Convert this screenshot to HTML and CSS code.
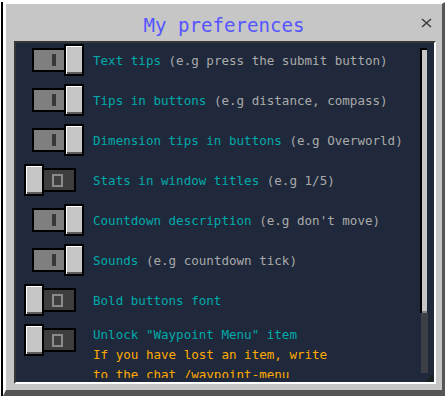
FILE: index.html
```html
<!DOCTYPE html>
<html lang="en">
  <head>
    <meta charset="UTF-8" />
    <meta name="viewport" content="width=device-width, initial-scale=1.0" />
    <title>My preferences</title>
    <link rel="stylesheet" href="styles.css">
  </head>
  <body>
    <div class="window">
      <div class="frame">
        <div class="header">
          <span></span>
          <h1 class="title">My preferences</h1>
          <button class="close" title="Close">
            <svg width="11" height="10" viewBox="0 0 11 10">
              <path d="M1 1 L10 9 M10 1 L1 9" stroke="#3f3f3f" stroke-width="1.6" fill="none" />
            </svg>
          </button>
        </div>

        <div class="panel">
          <ul class="options">
            <li class="option">
              <div class="toggle on"><span class="track"><span class="mark"></span></span><span class="knob"></span></div>
              <div class="label"><span class="name">Text tips</span> <span class="hint">(e.g press the submit button)</span></div>
            </li>
            <li class="option">
              <div class="toggle on"><span class="track"><span class="mark"></span></span><span class="knob"></span></div>
              <div class="label"><span class="name">Tips in buttons</span> <span class="hint">(e.g distance, compass)</span></div>
            </li>
            <li class="option">
              <div class="toggle on"><span class="track"><span class="mark"></span></span><span class="knob"></span></div>
              <div class="label"><span class="name">Dimension tips in buttons</span> <span class="hint">(e.g Overworld)</span></div>
            </li>
            <li class="option">
              <div class="toggle off"><span class="knob"></span><span class="track"><span class="ring"></span></span></div>
              <div class="label"><span class="name">Stats in window titles</span> <span class="hint">(e.g 1/5)</span></div>
            </li>
            <li class="option">
              <div class="toggle on"><span class="track"><span class="mark"></span></span><span class="knob"></span></div>
              <div class="label"><span class="name">Countdown description</span> <span class="hint">(e.g don't move)</span></div>
            </li>
            <li class="option">
              <div class="toggle on"><span class="track"><span class="mark"></span></span><span class="knob"></span></div>
              <div class="label"><span class="name">Sounds</span> <span class="hint">(e.g countdown tick)</span></div>
            </li>
            <li class="option">
              <div class="toggle off"><span class="knob"></span><span class="track"><span class="ring"></span></span></div>
              <div class="label"><span class="name">Bold buttons font</span></div>
            </li>
            <li class="option multi">
              <div class="toggle off"><span class="knob"></span><span class="track"><span class="ring"></span></span></div>
              <div class="label">
                <span class="name">Unlock "Waypoint Menu" item</span>
                <div class="warning">If you have lost an item, write<br />to the chat /waypoint-menu</div>
              </div>
            </li>
          </ul>

          <div class="scrollbar">
            <div class="thumb"></div>
            <div class="rail"></div>
          </div>
          <span class="grip"></span>
        </div>
      </div>
    </div>
  </body>
</html>
```

FILE: styles.css
```css
body {
  margin: 0;
  width: 447px;
  height: 396px;
  overflow: hidden;
  background: #fff;
  font-family: 'DejaVu Sans Mono', 'Liberation Mono', monospace;
}

.window {
  margin: 2px 0 0 1px;
  width: 444px;
  border-left: 2px solid #000;
  box-sizing: border-box;
}

.frame {
  height: 394px;
  box-sizing: border-box;
  display: flex;
  flex-direction: column;
  background: #c6c6c6;
  border-top: 2px solid #fff;
  border-left: 3px solid #fff;
  border-right: 3px solid #555;
  border-bottom: 6px solid #555;
}

/* Заголовок */
.header {
  height: 37px;
  display: grid;
  grid-template-columns: 1fr auto 1fr;
  align-items: center;
}

.title {
  margin: 0;
  padding-top: 6px;
  line-height: 31px;
  font-size: 19.1px;
  font-weight: normal;
  color: #5555ff;
}

.close {
  justify-self: end;
  margin-right: 10px;
  padding: 0;
  border: none;
  background: none;
  width: 11px;
  height: 10px;
  display: flex;
}

/* Список настроек */
.panel {
  flex: 1;
  min-height: 0;
  margin: 0 6px 6px 8px;
  display: flex;
  position: relative;
  overflow: hidden;
  background: #20293b;
  border-top: 2px solid #373737;
  border-left: 2px solid #373737;
  border-right: 2px solid #fff;
  border-bottom: 2px solid #fff;
}

.options {
  flex: 1;
  list-style: none;
  margin: 0 0 4px 0;
  padding: 1px 0 0 8px;
  display: flex;
  flex-direction: column;
  gap: 8px;
  overflow: hidden;
}

.option {
  flex-shrink: 0;
  display: flex;
  align-items: center;
  min-height: 32px;
  font-size: 12.56px;
  line-height: 20px;
  white-space: nowrap;
}

.option.multi {
  align-items: flex-start;
}

.label {
  margin-left: 9px;
  padding-top: 2px;
}

.multi .label {
  margin-top: -1px;
}

.name {
  color: #00aaaa;
}

.hint {
  color: #aaaaaa;
}

.warning {
  color: #ffaa00;
}

/* Переключатель */
.toggle {
  width: 60px;
  height: 32px;
  flex-shrink: 0;
  display: flex;
  align-items: center;
}

.toggle.on {
  justify-content: flex-end;
}

.knob {
  position: relative;
  z-index: 1;
  width: 20px;
  height: 32px;
  box-sizing: border-box;
  border: 2px solid #000;
  background: #c6c6c6;
  box-shadow: inset 1px 1px 0 #fff, inset 0 -2px 0 #5c5c5c;
}

.track {
  width: 34px;
  height: 24px;
  box-sizing: border-box;
  border: 2px solid #000;
  display: flex;
  align-items: center;
}

.on .track {
  margin-right: -2px;
  padding-left: 18px;
  background: #7f7f7f;
}

.off .track {
  margin-left: -2px;
  padding-left: 8px;
  background: #3e3e3e;
}

.mark {
  width: 4px;
  height: 12px;
  background: #373737;
}

.ring {
  width: 11px;
  height: 13px;
  box-sizing: border-box;
  border: 2px solid #8b8b8b;
}

/* Полоса прокрутки */
.scrollbar {
  width: 8px;
  margin: 5px 6px 9px 0;
  display: flex;
  flex-direction: column;
}

.thumb {
  height: 265px;
  flex-shrink: 0;
  box-sizing: border-box;
  border-top: 2px solid #000;
  border-left: 2px solid #000;
  background: #c6c6c6;
  box-shadow: inset 0 -2px 0 #808080;
  margin-right: 1px;
}

.rail {
  flex: 1;
  margin-left: 1px;
  background: #3c3f45;
}

.grip {
  position: absolute;
  right: 1px;
  bottom: 0;
  width: 8px;
  height: 8px;
  background: linear-gradient(135deg, #20293b 50%, #1a221f 50%);
}
```
